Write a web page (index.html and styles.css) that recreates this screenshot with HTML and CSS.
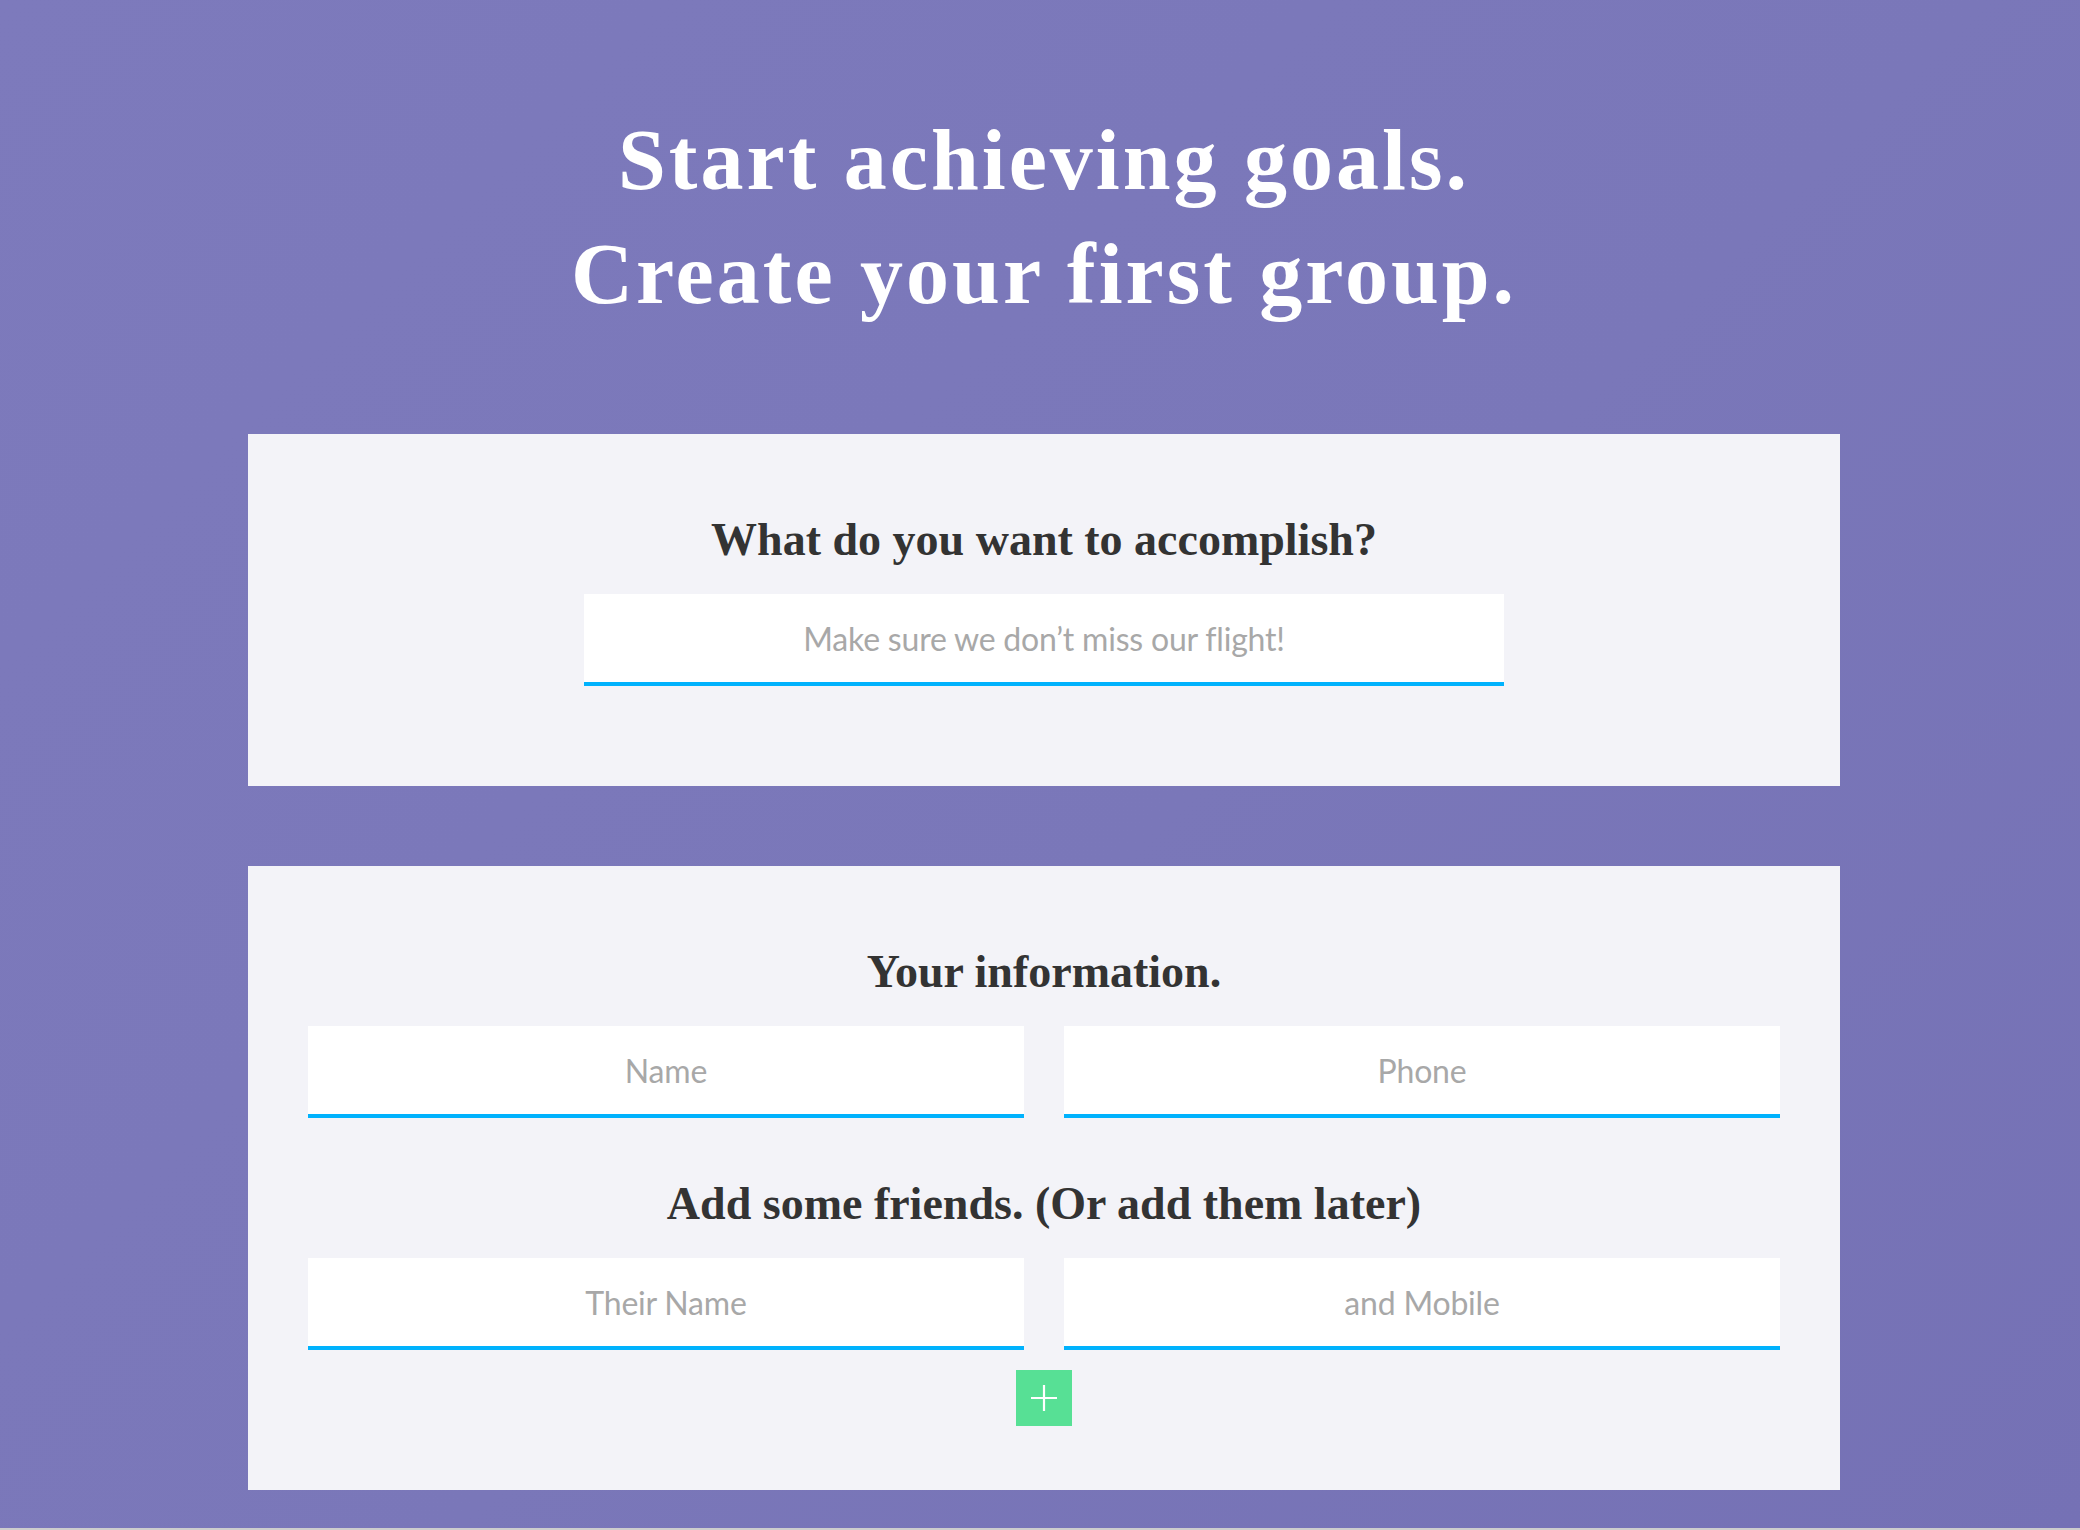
FILE: index.html
```html
<!DOCTYPE html>
<html lang="en">
<head>
<meta charset="utf-8">
<title>Create your first group</title>
<link rel="stylesheet" href="styles.css">
</head>
<body>
<main class="page">
  <h1 class="hero-title">Start achieving goals.<br>Create your first group.</h1>

  <section class="card card-goal">
    <h2 class="card-heading">What do you want to accomplish?</h2>
    <input class="field field-wide" type="text" placeholder="Make sure we don’t miss our flight!">
  </section>

  <section class="card card-people">
    <h2 class="card-heading">Your information.</h2>
    <div class="field-row">
      <input class="field" type="text" placeholder="Name">
      <input class="field" type="text" placeholder="Phone">
    </div>
    <h2 class="card-heading card-heading-spaced">Add some friends. (Or add them later)</h2>
    <div class="field-row">
      <input class="field" type="text" placeholder="Their Name">
      <input class="field" type="text" placeholder="and Mobile">
    </div>
    <button class="add-btn" type="button" aria-label="Add friend">
      <svg width="26" height="26" viewBox="0 0 26 26"><path d="M13 0V26M0 13H26" stroke="#fff" stroke-width="2.2" fill="none"/></svg>
    </button>
  </section>
</main>
</body>
</html>
```

FILE: styles.css
```css
html, body {
  margin: 0;
  padding: 0;
}
body {
  background: #cdcdcd;
  height: 1530px;
  overflow: hidden;
}
.page {
  box-sizing: border-box;
  height: 1528px;
  padding: 103px 0 0 8px;
  display: flex;
  flex-direction: column;
  align-items: center;
  background: linear-gradient(135deg, #7d7abc 0%, #7a77b9 55%, #7571b5 100%);
}
.hero-title {
  margin: 0;
  font-family: "Liberation Serif", "DejaVu Serif", serif;
  font-weight: 700;
  font-size: 86px;
  line-height: 114px;
  letter-spacing: 3px;
  color: #ffffff;
  text-align: center;
}
.card {
  box-sizing: border-box;
  width: 1592px;
  background: #f3f3f8;
  display: flex;
  flex-direction: column;
  align-items: center;
  padding: 80px 60px 0;
}
.card-goal {
  margin-top: 103px;
  padding-bottom: 100px;
}
.card-people {
  margin-top: 80px;
  padding-bottom: 64px;
}
.card-heading {
  margin: 0 0 28px;
  font-family: "Liberation Serif", "DejaVu Serif", serif;
  font-weight: 700;
  font-size: 46px;
  line-height: 52px;
  color: #333333;
  text-align: center;
}
.card-heading-spaced {
  margin-top: 60px;
}
.field {
  box-sizing: border-box;
  display: block;
  width: 100%;
  height: 92px;
  margin: 0;
  padding: 0 20px;
  border: 0;
  border-bottom: 4px solid #00b2fd;
  border-radius: 0;
  background: #ffffff;
  font-family: Lato, "Liberation Sans", sans-serif;
  font-size: 32px;
  letter-spacing: -0.2px;
  color: #333;
  text-align: center;
  outline: none;
}
.field::placeholder {
  color: #a8a8a8;
  opacity: 1;
}
.field-wide {
  width: 920px;
}
.field-row {
  width: 100%;
  display: grid;
  grid-template-columns: 1fr 1fr;
  column-gap: 40px;
}
.add-btn {
  margin-top: 20px;
  width: 56px;
  height: 56px;
  padding: 0;
  border: 0;
  border-radius: 0;
  background: #57e095;
  display: flex;
  align-items: center;
  justify-content: center;
  cursor: pointer;
}
.add-btn svg {
  display: block;
}
```
